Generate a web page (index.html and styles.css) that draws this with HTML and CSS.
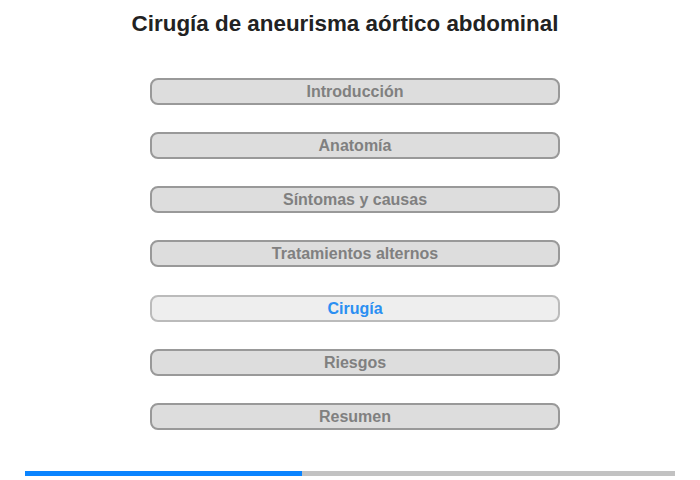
FILE: index.html
```html
<!DOCTYPE html>
<html lang="es">
<head>
<meta charset="utf-8">
<link rel="stylesheet" href="styles.css">
</head>
<body>
<div class="page">
  <h1 class="title">Cirugía de aneurisma aórtico abdominal</h1>
  <nav class="menu">
    <div class="item">Introducción</div>
    <div class="item">Anatomía</div>
    <div class="item">Síntomas y causas</div>
    <div class="item">Tratamientos alternos</div>
    <div class="item active">Cirugía</div>
    <div class="item">Riesgos</div>
    <div class="item">Resumen</div>
  </nav>
  <div class="progress"><div class="progress-fill" style="width:42.6%"></div></div>
</div>
</body>
</html>
```
FILE: styles.css
```css
html, body {
  margin: 0;
  padding: 0;
  background: #fff;
}
.page {
  width: 700px;
  height: 480px;
  font-family: "Liberation Sans", Arial, sans-serif;
  display: flex;
  flex-direction: column;
  align-items: center;
}
.title {
  margin: 10.5px 10px 0 0;
  font-size: 22.4px;
  line-height: 26px;
  font-weight: bold;
  color: #222;
}
.menu {
  margin-top: 41.5px;
  margin-left: 10px;
  display: flex;
  flex-direction: column;
  gap: 27.17px;
}
.item {
  width: 406px;
  height: 23px;
  box-sizing: content-box;
  border: 2px solid #999;
  border-radius: 8px;
  background: #ddd;
  color: #808080;
  font-size: 16px;
  font-weight: bold;
  line-height: 23px;
  text-align: center;
}
.item.active {
  background: #eee;
  border-color: #bbb;
  color: #2b8ff2;
}
.progress {
  margin-top: 41px;
  width: 650px;
  height: 5px;
  background: #c2c2c2;
}
.progress-fill {
  height: 100%;
  background: #0a84ff;
}
```
